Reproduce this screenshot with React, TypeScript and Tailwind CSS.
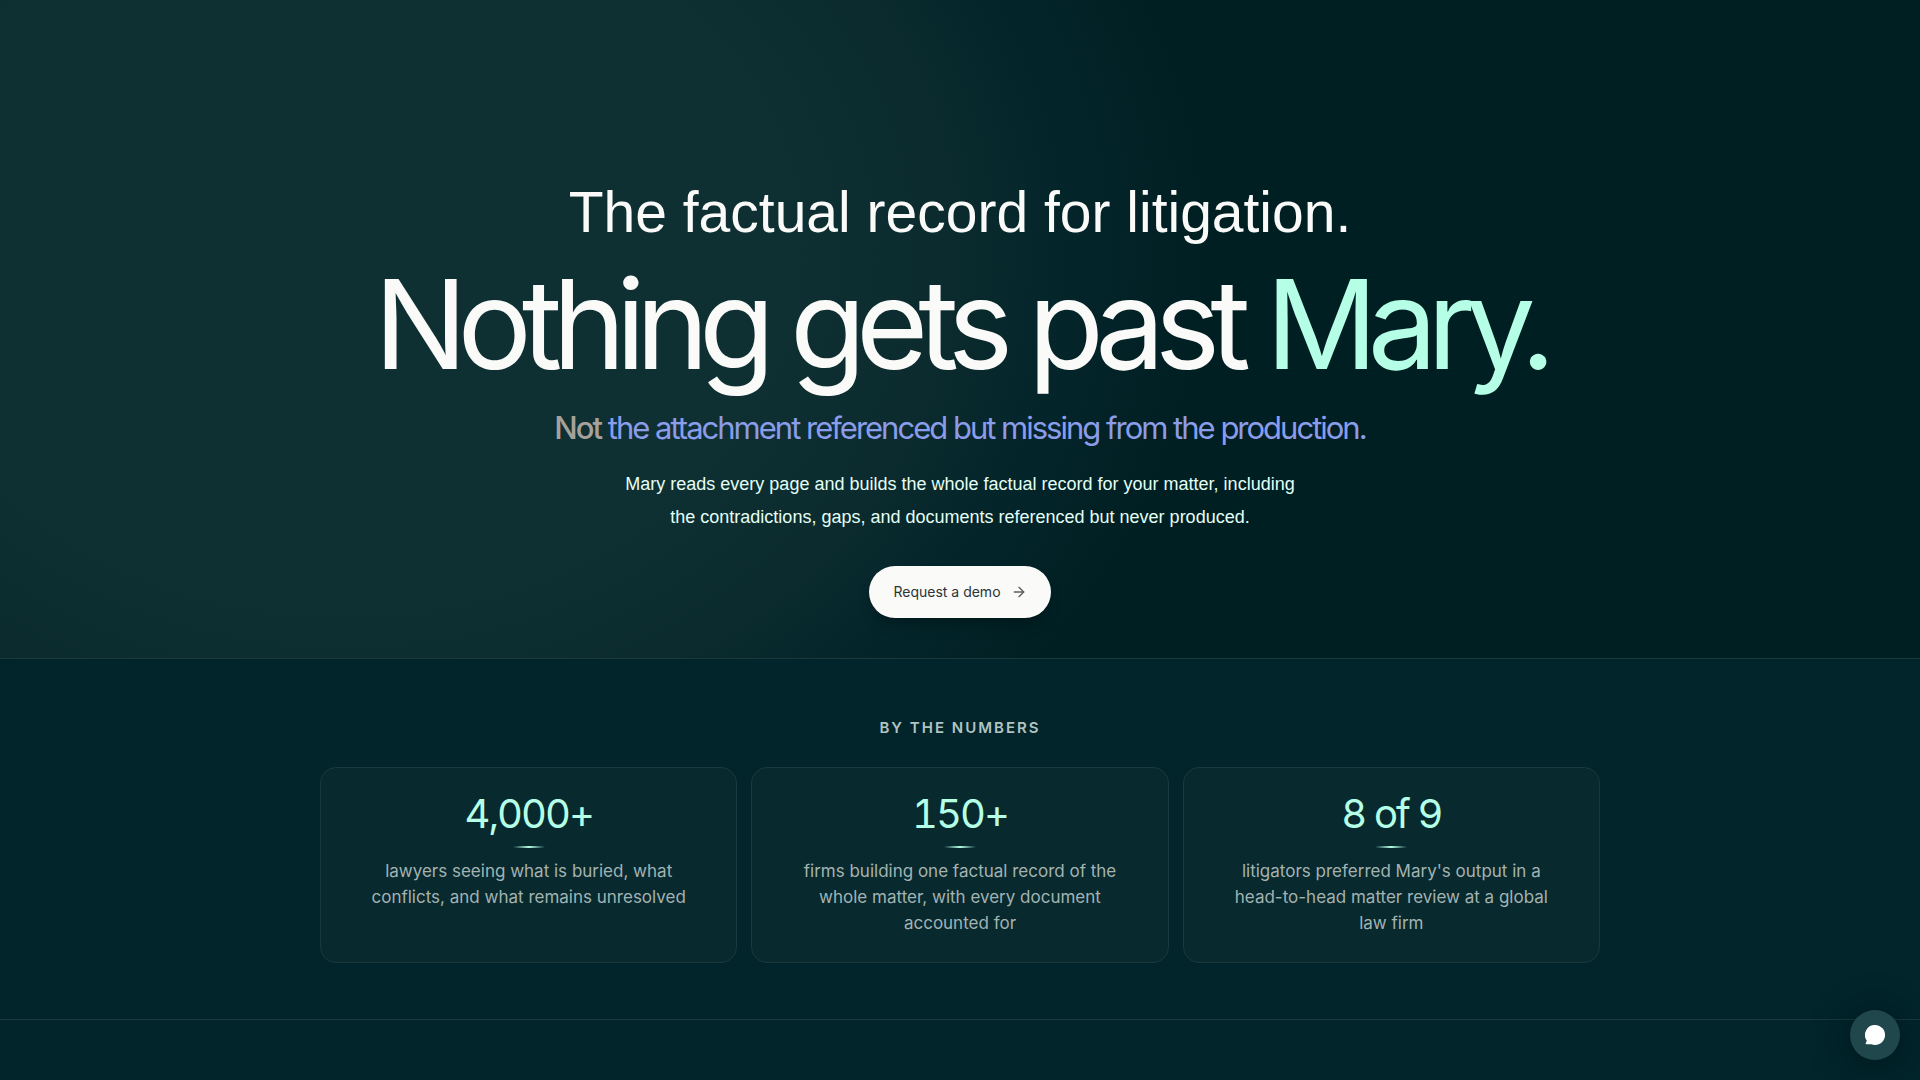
import { ArrowRight } from "lucide-react";

const stats = [
  {
    value: "4,000+",
    label: "lawyers seeing what is buried, what conflicts, and what remains unresolved",
  },
  {
    value: "150+",
    label: "firms building one factual record of the whole matter, with every document accounted for",
  },
  {
    value: "8 of 9",
    label: "litigators preferred Mary's output in a head-to-head matter review at a global law firm",
  },
];

const StatCard = ({ value, label }: { value: string; label: string }) => (
  <div className="flex flex-1 flex-col items-center rounded-2xl border border-[#1a393d] bg-[#08292e] px-12 pt-6 pb-6.5 text-center">
    <p className="text-[40px] leading-11 tracking-[-2px] text-[#b4ffe6] tabular-nums">
      {value}
    </p>
    <div className="my-2.5 h-0.5 w-8 bg-linear-to-r from-transparent via-[#b4ffe6] to-transparent" />
    <p className="text-[17px] leading-[26px] text-[#a3b3b2]">{label}</p>
  </div>
);

const Hero = () => (
  <section className="border-b border-[#1a393d] bg-[#001f23] bg-[radial-gradient(ellipse_870px_700px_at_18%_38%,#0f3033_0%,#0f3033_50%,#0b2b2e_69%,#04252a_82%,#001f23_100%)] px-6 pt-44 pb-10">
    <div className="flex flex-col items-center text-center">
      <p className="font-['Liberation_Sans',sans-serif] text-[57px] leading-[72px]">
        The factual record for litigation.
      </p>
      <h1 className="text-[124px] leading-[152px] tracking-[-10px]">
        Nothing gets past <span className="text-[#b4ffe6]">Mary.</span>
      </h1>
      <p className="mt-2 text-[31px] leading-10 tracking-[-2px] text-[#8b9cea]">
        <span className="font-medium text-[#a6a29a]">Not</span> the attachment
        referenced but missing from the production.
      </p>
      <p className="mt-5 max-w-[690px] font-['Liberation_Sans',sans-serif] text-lg leading-[33px] text-[#e3fff6]">
        Mary reads every page and builds the whole factual record for your
        matter, including the contradictions, gaps, and documents referenced but
        never produced.
      </p>
      <button
        className="mt-8 flex h-[52px] items-center gap-2.5 rounded-full bg-[#fafaf8] px-6 text-sm text-[#2b3436] shadow-lg shadow-black/20"
        type="button"
      >
        Request a demo
        <ArrowRight className="size-4 text-[#5a6061]" strokeWidth={2} />
      </button>
    </div>
  </section>
);

const Numbers = () => (
  <section className="border-b border-[#1a393d] px-6 py-14">
    <div className="mx-auto flex max-w-[1280px] flex-col items-center">
      <h2 className="mb-6.5 text-[15px] leading-[26px] font-semibold tracking-[2px] text-[#b0c4c2]">
        BY THE NUMBERS
      </h2>
      <div className="flex w-full gap-3.5">
        {stats.map((stat) => (
          <StatCard key={stat.value} label={stat.label} value={stat.value} />
        ))}
      </div>
    </div>
  </section>
);

const ChatButton = () => (
  <button
    aria-label="Open chat"
    className="fixed right-5 bottom-5 flex size-[50px] items-center justify-center rounded-full bg-[#1f474c] shadow-[0_4px_40px_rgba(0,0,0,0.45)]"
    type="button"
  >
    <svg aria-hidden="true" className="size-5 fill-white" viewBox="0 0 20 20">
      <path d="M10 0a10 10 0 1 1-3.6 19.3H1.4c-.7 0-1-.8-.6-1.3l1-2.2A10 10 0 0 1 10 0Z" />
    </svg>
  </button>
);

export default function App() {
  return (
    <main className="min-h-screen bg-[#01252b] font-['Inter',sans-serif] text-[#fafaf8]">
      <Hero />
      <Numbers />
      <ChatButton />
    </main>
  );
}
